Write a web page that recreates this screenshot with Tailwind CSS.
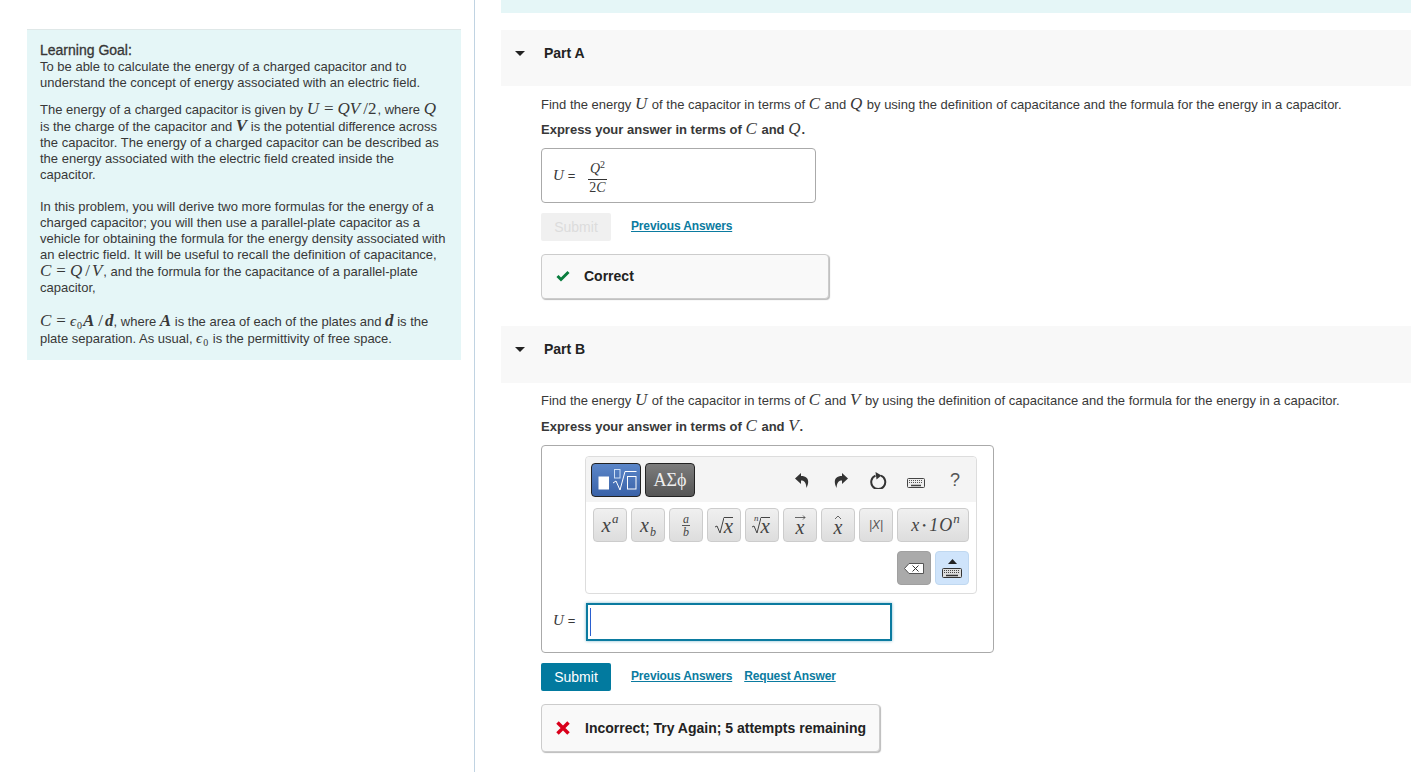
<!DOCTYPE html>
<html lang="en">

<head>
    <meta charset="UTF-8">
    <title>Capacitor energy</title>
    <script src="https://cdn.jsdelivr.net/npm/@tailwindcss/browser@4"></script>
</head>

<body class="bg-white text-[#383838] text-[13px] leading-[16px] font-['Liberation_Sans',Arial,sans-serif] h-[772px] overflow-hidden">
    <div class="flex h-[772px]">
        <!-- left column -->
        <aside class="w-[475px] shrink-0 border-r border-[#c0d3e2] pl-[27px] pr-[13px] pt-[29px]">
            <div class="bg-[#e5f6f7] border-t border-[#dfe8e8] px-[13px] pt-[12px] h-[331px]">
                <p><span class="text-[14px] [-webkit-text-stroke:0.3px_#333]">Learning Goal:</span><br>To be able to calculate the energy of a charged capacitor and to understand the concept of energy associated with an electric field.</p>
                <p class="mt-[10px]">The energy of a charged capacitor is given by <i class="font-['Liberation_Serif',serif] text-[17px] leading-[16px] pr-[1px]">U</i><span class="font-['Liberation_Serif',serif] text-[17px] leading-[16px] mx-[4px]">=</span><i class="font-['Liberation_Serif',serif] text-[17px] leading-[16px] pr-[2px]">QV</i><span class="font-['Liberation_Serif',serif] text-[17px] leading-[16px] px-[1px]">/2</span>, where <i class="font-['Liberation_Serif',serif] text-[17px] leading-[16px] pr-[1px]">Q</i> is the charge of the capacitor and <i class="font-['Liberation_Serif',serif] text-[17px] leading-[16px] font-semibold">V</i> is the potential difference across the capacitor. The energy of a charged capacitor can be described as the energy associated with the electric field created inside the capacitor.</p>
                <p class="mt-[16px]">In this problem, you will derive two more formulas for the energy of a charged capacitor; you will then use a parallel-plate capacitor as a vehicle for obtaining the formula for the energy density associated with an electric field. It will be useful to recall the definition of capacitance, <i class="font-['Liberation_Serif',serif] text-[17px] leading-[16px] pr-[1px]">C</i><span class="font-['Liberation_Serif',serif] text-[17px] leading-[16px] mx-[4px]">=</span><i class="font-['Liberation_Serif',serif] text-[17px] leading-[16px] pr-[1px]">Q</i><span class="font-['Liberation_Serif',serif] text-[17px] leading-[16px] px-[2px]">/</span><i class="font-['Liberation_Serif',serif] text-[17px] leading-[16px] pr-[1px]">V</i>, and the formula for the capacitance of a parallel-plate capacitor,</p>
                <p class="mt-[17px]"><i class="font-['Liberation_Serif',serif] text-[17px] leading-[16px] pr-[1px]">C</i><span class="font-['Liberation_Serif',serif] text-[17px] leading-[16px] mx-[4px]">=</span><i class="font-['Liberation_Serif',serif] text-[15px] leading-[16px] pr-[1px]">ϵ</i><sub class="font-['Liberation_Serif',serif] text-[10px] pr-[1px]">0</sub><i class="font-['Liberation_Serif',serif] text-[17px] leading-[16px] font-semibold pr-[2px]">A</i><span class="font-['Liberation_Serif',serif] text-[17px] leading-[16px] px-[2px]">/</span><i class="font-['Liberation_Serif',serif] text-[17px] leading-[16px] font-semibold">d</i>, where <i class="font-['Liberation_Serif',serif] text-[17px] leading-[16px] font-semibold">A</i> is the area of each of the plates and <i class="font-['Liberation_Serif',serif] text-[17px] leading-[16px] font-semibold">d</i> is the plate separation. As usual, <i class="font-['Liberation_Serif',serif] text-[15px] leading-[16px] pr-[1px]">ϵ</i><sub class="font-['Liberation_Serif',serif] text-[10px] pr-[1px]">0</sub> is the permittivity of free space.</p>
            </div>
        </aside>

        <!-- right column -->
        <main class="flex-1 pl-[26px]">
            <div class="h-[13px] bg-[#e5f6f7]"></div>

            <!-- Part A -->
            <div class="mt-[17px] h-[56px] bg-[#f8f8f8] flex items-start pt-[15px] text-[14px]">
                <svg class="ml-[14px] mt-[6px]" width="10" height="5" viewBox="0 0 10 5"><path d="M0 0h10L5 5z" fill="#222" /></svg>
                <span class="ml-[19px] font-bold text-[#222]">Part A</span>
            </div>
            <div class="pl-[40px]">
                <p class="mt-[11px]">Find the energy <i class="font-['Liberation_Serif',serif] text-[17px] leading-[0] pr-[1px]">U</i> of the capacitor in terms of <i class="font-['Liberation_Serif',serif] text-[17px] leading-[0] pr-[1px]">C</i> and <i class="font-['Liberation_Serif',serif] text-[17px] leading-[0] pr-[1px]">Q</i> by using the definition of capacitance and the formula for the energy in a capacitor.</p>
                <p class="mt-[9px] font-bold">Express your answer in terms of <i class="font-['Liberation_Serif',serif] text-[17px] leading-[0] font-normal pr-[1px]">C</i> and <i class="font-['Liberation_Serif',serif] text-[17px] leading-[0] font-normal pr-[1px]">Q</i>.</p>
                <div class="mt-[10px] w-[275px] h-[55px] border border-[#aaa] rounded-[4px] flex items-center pl-[11px]">
                    <span class="w-[35px] shrink-0"><i class="font-['Liberation_Serif',serif] text-[15px]">U</i><span class="ml-[4px]">=</span></span>
                    <span class="flex flex-col items-center font-['Liberation_Serif',serif] text-[14px] leading-[14px] pt-[5px]">
                        <span class="border-b border-[#333] px-[1px] w-[19px] text-center pb-[3px]"><i>Q</i><sup class="text-[10px] leading-[0]">2</sup></span>
                        <span class="pt-[1px]">2<i>C</i></span>
                    </span>
                </div>
                <div class="mt-[10px] flex items-start">
                    <button class="w-[70px] h-[28px] bg-[#f0f0f0] text-[#dcdcdc] text-[14px] rounded-[2px]">Submit</button>
                    <a href="#" class="ml-[20px] mt-[5px] text-[12px] font-bold text-[#0b7ba0] underline tracking-[-0.15px]">Previous Answers</a>
                </div>
                <div class="mt-[13px] w-[288px] h-[45px] bg-[#f9f9f9] border border-[#ccc] rounded-[4px] shadow-[1px_1px_1px_#bbb] flex items-center pl-[14px] pb-[1px] font-bold text-[14px] text-[#222]">
                    <svg width="14" height="12" viewBox="0 0 14 12"><path d="M1.500 6 5 9.500 12.500 2" fill="none" stroke="#0a7d3e" stroke-width="3" /></svg>
                    <span class="ml-[14px]">Correct</span>
                </div>
            </div>

            <!-- Part B -->
            <div class="mt-[27px] h-[57px] bg-[#f8f8f8] flex items-start pt-[15px] text-[14px]">
                <svg class="ml-[14px] mt-[6px]" width="10" height="5" viewBox="0 0 10 5"><path d="M0 0h10L5 5z" fill="#222" /></svg>
                <span class="ml-[19px] font-bold text-[#222]">Part B</span>
            </div>
            <div class="pl-[40px]">
                <p class="mt-[10px]">Find the energy <i class="font-['Liberation_Serif',serif] text-[17px] leading-[0] pr-[1px]">U</i> of the capacitor in terms of <i class="font-['Liberation_Serif',serif] text-[17px] leading-[0] pr-[1px]">C</i> and <i class="font-['Liberation_Serif',serif] text-[17px] leading-[0] pr-[1px]">V</i> by using the definition of capacitance and the formula for the energy in a capacitor.</p>
                <p class="mt-[10px] font-bold">Express your answer in terms of <i class="font-['Liberation_Serif',serif] text-[17px] leading-[0] font-normal pr-[1px]">C</i> and <i class="font-['Liberation_Serif',serif] text-[17px] leading-[0] font-normal pr-[1px]">V</i>.</p>

                <!-- answer box with math palette -->
                <div class="mt-[10px] w-[453px] h-[208px] border border-[#aaa] rounded-[4px] pt-[10px] pl-[43px]">
                    <div class="w-[392px] h-[138px] border border-[#ddd] rounded-[4px]">
                        <div class="h-[45px] bg-[#f4f4f4] flex items-center pl-[5px] pt-[1px] rounded-t-[4px]">
                            <div class="w-[50px] h-[34px] rounded-[4px] border border-[#222] bg-gradient-to-b from-[#5b86c8] to-[#3a62a8]">
                                <svg width="48" height="32" viewBox="0 0 48 32" fill="none" stroke="#fff"><rect x="7" y="13" width="9.500" height="12" fill="#fff" /><rect x="22.500" y="5.500" width="5.500" height="8.500" stroke="#cfe0f5" /><path d="M21 19l3-2 4 9 5-18.500h11.500" /><rect x="35.500" y="12.500" width="8.500" height="12.500" /></svg>
                            </div>
                            <div class="ml-[4px] w-[50px] h-[34px] rounded-[4px] border border-[#222] bg-gradient-to-b from-[#7d7d7d] to-[#555] flex items-center justify-center text-[#eee] text-[18px] font-['Liberation_Serif',serif]">ΑΣϕ</div>
                            <svg class="ml-[100px]" width="14" height="15" viewBox="0 0 14 15"><path d="M6 0 0 5.500 6 11V7.500c3 0 5 1.500 5.500 7.500 3-6 2.500-12-5.500-12z" fill="#333" /></svg>
                            <svg class="ml-[25px]" width="14" height="15" viewBox="0 0 14 15"><path d="M8 0l6 5.500L8 11V7.500c-3 0-5 1.500-5.500 7.500C-.5 9 0 3 8 3z" fill="#333" /></svg>
                            <svg class="ml-[22px]" width="17" height="17" viewBox="0 0 17 17" fill="none"><path d="M11 3.600a7 7 0 1 1-5.500 0" stroke="#333" stroke-width="2" /><path d="M5.500 0l6 3.500L6.500 7.500z" fill="#333" /></svg>
                            <svg class="ml-[20px] mt-[5px]" width="18" height="10" viewBox="0 0 18 10"><rect x=".5" y=".5" width="17" height="9" rx="1" fill="#eee" stroke="#444" /><path d="M2 2.500h14M2 4.500h14" stroke="#555" stroke-dasharray="1 1" /><path d="M4 7.500h10" stroke="#444" stroke-width="1.500" /></svg>
                            <span class="ml-[25px] text-[18px] text-[#555]">?</span>
                        </div>
                        <div class="flex gap-[4px] pl-[7px] pt-[6px] font-['Liberation_Serif',serif] italic text-[#444]">
                            <div class="w-[34px] h-[34px] rounded-[4px] border border-[#ccc] bg-gradient-to-b from-[#f0f0f0] to-[#ddd] flex items-center justify-center text-[21px]">x<sup class="text-[13px] leading-[0] ml-[1px]">a</sup></div>
                            <div class="w-[34px] h-[34px] rounded-[4px] border border-[#ccc] bg-gradient-to-b from-[#f0f0f0] to-[#ddd] flex items-center justify-center text-[20px]">x<sub class="text-[12px] leading-[0] ml-[1px] mt-[7px]">b</sub></div>
                            <div class="w-[34px] h-[34px] rounded-[4px] border border-[#ccc] bg-gradient-to-b from-[#f0f0f0] to-[#ddd] flex flex-col items-center justify-center text-[12px] leading-[12px]"><span class="border-b border-[#555] px-[1px]">a</span><span>b</span></div>
                            <div class="w-[34px] h-[34px] rounded-[4px] border border-[#ccc] bg-gradient-to-b from-[#f0f0f0] to-[#ddd] flex items-center justify-center text-[21px]"><svg width="9" height="17" viewBox="0 0 9 17"><path d="M0 10l2-1 3 7L9 .5" fill="none" stroke="#444" /></svg><span class="border-t border-[#444] leading-[16px] h-[17px]">x</span></div>
                            <div class="w-[34px] h-[34px] rounded-[4px] border border-[#ccc] bg-gradient-to-b from-[#f0f0f0] to-[#ddd] flex items-center justify-center text-[21px]"><sup class="text-[9px] leading-[0] -mr-[7px] -mt-[6px]">n</sup><svg width="9" height="17" viewBox="0 0 9 17"><path d="M0 10l2-1 3 7L9 .5" fill="none" stroke="#444" /></svg><span class="border-t border-[#444] leading-[16px] h-[17px]">x</span></div>
                            <div class="w-[34px] h-[34px] rounded-[4px] border border-[#ccc] bg-gradient-to-b from-[#f0f0f0] to-[#ddd] flex flex-col items-center justify-center text-[20px] leading-[15px]"><svg width="11" height="5" viewBox="0 0 11 5"><path d="M0 2.500h10M8 .5l2 2-2 2" fill="none" stroke="#444" stroke-width=".8" /></svg>x</div>
                            <div class="w-[34px] h-[34px] rounded-[4px] border border-[#ccc] bg-gradient-to-b from-[#f0f0f0] to-[#ddd] flex flex-col items-center justify-center text-[20px] leading-[15px]"><svg width="8" height="5" viewBox="0 0 8 5"><path d="M1 4l3-3 3 3" fill="none" stroke="#444" stroke-width=".8" /></svg>x</div>
                            <div class="w-[34px] h-[34px] rounded-[4px] border border-[#ccc] bg-gradient-to-b from-[#f0f0f0] to-[#ddd] flex items-center justify-center text-[12px] text-[#555] font-['Liberation_Sans',sans-serif]">|X|</div>
                            <div class="w-[72px] h-[34px] rounded-[4px] border border-[#ccc] bg-gradient-to-b from-[#f0f0f0] to-[#ddd] flex items-center justify-center pl-[6px] text-[18px] tracking-[1px]">x<span class="text-[11px] mx-[2px] not-italic">•</span>1O<sup class="text-[13px] leading-[0]">n</sup></div>
                        </div>
                        <div class="flex gap-[4px] pl-[311px] pt-[9px]">
                            <div class="w-[34px] h-[34px] rounded-[4px] bg-[#aaa] border border-[#a0a0a0] flex items-center justify-center">
                                <svg width="20" height="11" viewBox="0 0 20 11"><path d="M5 .5h14.500v10H5L.5 5.500z" fill="#fff" stroke="#555" /><path d="M8.500 2.500l6 6M14.500 2.500l-6 6" stroke="#333" /></svg>
                            </div>
                            <div class="w-[34px] h-[34px] rounded-[4px] bg-[#cfe4fb] border border-[#c0d8f0] flex flex-col items-center justify-center gap-[4px]">
                                <svg width="9" height="5" viewBox="0 0 9 5"><path d="M4.500 0l4.500 5H0z" fill="#222" /></svg>
                                <svg width="20" height="10" viewBox="0 0 20 10"><rect x=".5" y=".5" width="19" height="9" rx="1" fill="#ddd" stroke="#333" /><path d="M2 2.500h16M2 4.500h16" stroke="#444" stroke-dasharray="1 1" /><path d="M4 7.500h12" stroke="#333" stroke-width="1.500" /></svg>
                            </div>
                        </div>
                    </div>
                    <div class="mt-[9px] -ml-[32px] flex items-center">
                        <span class="w-[33px] shrink-0 pb-[3px]"><i class="font-['Liberation_Serif',serif] text-[15px]">U</i><span class="ml-[4px]">=</span></span>
                        <div class="w-[306px] h-[38px] border-2 border-[#0b7ba0] shadow-[0_0_3px_#7fb8cc] pl-[2px] pt-[3px]">
                            <div class="w-px h-[28px] bg-[#2a5fd0]"></div>
                        </div>
                    </div>
                </div>

                <div class="mt-[10px] flex items-start">
                    <button class="w-[70px] h-[28px] bg-[#027a9f] text-white text-[14px] rounded-[2px]">Submit</button>
                    <a href="#" class="ml-[20px] mt-[5px] text-[12px] font-bold text-[#0b7ba0] underline tracking-[-0.15px]">Previous Answers</a>
                    <a href="#" class="ml-[12px] mt-[5px] text-[12px] font-bold text-[#0b7ba0] underline tracking-[-0.15px]">Request Answer</a>
                </div>
                <div class="mt-[13px] w-[339px] h-[48px] bg-[#f9f9f9] border border-[#ccc] rounded-[4px] shadow-[1px_1px_1px_#bbb] flex items-center pl-[14px] font-bold text-[14px] text-[#222]">
                    <svg width="14" height="14" viewBox="0 0 14 14"><path d="M1.500 1.500l11 11M12.500 1.500l-11 11" fill="none" stroke="#d9001b" stroke-width="3.500" /></svg>
                    <span class="ml-[15px]">Incorrect; Try Again; 5 attempts remaining</span>
                </div>
            </div>
        </main>
    </div>
</body>

</html>
